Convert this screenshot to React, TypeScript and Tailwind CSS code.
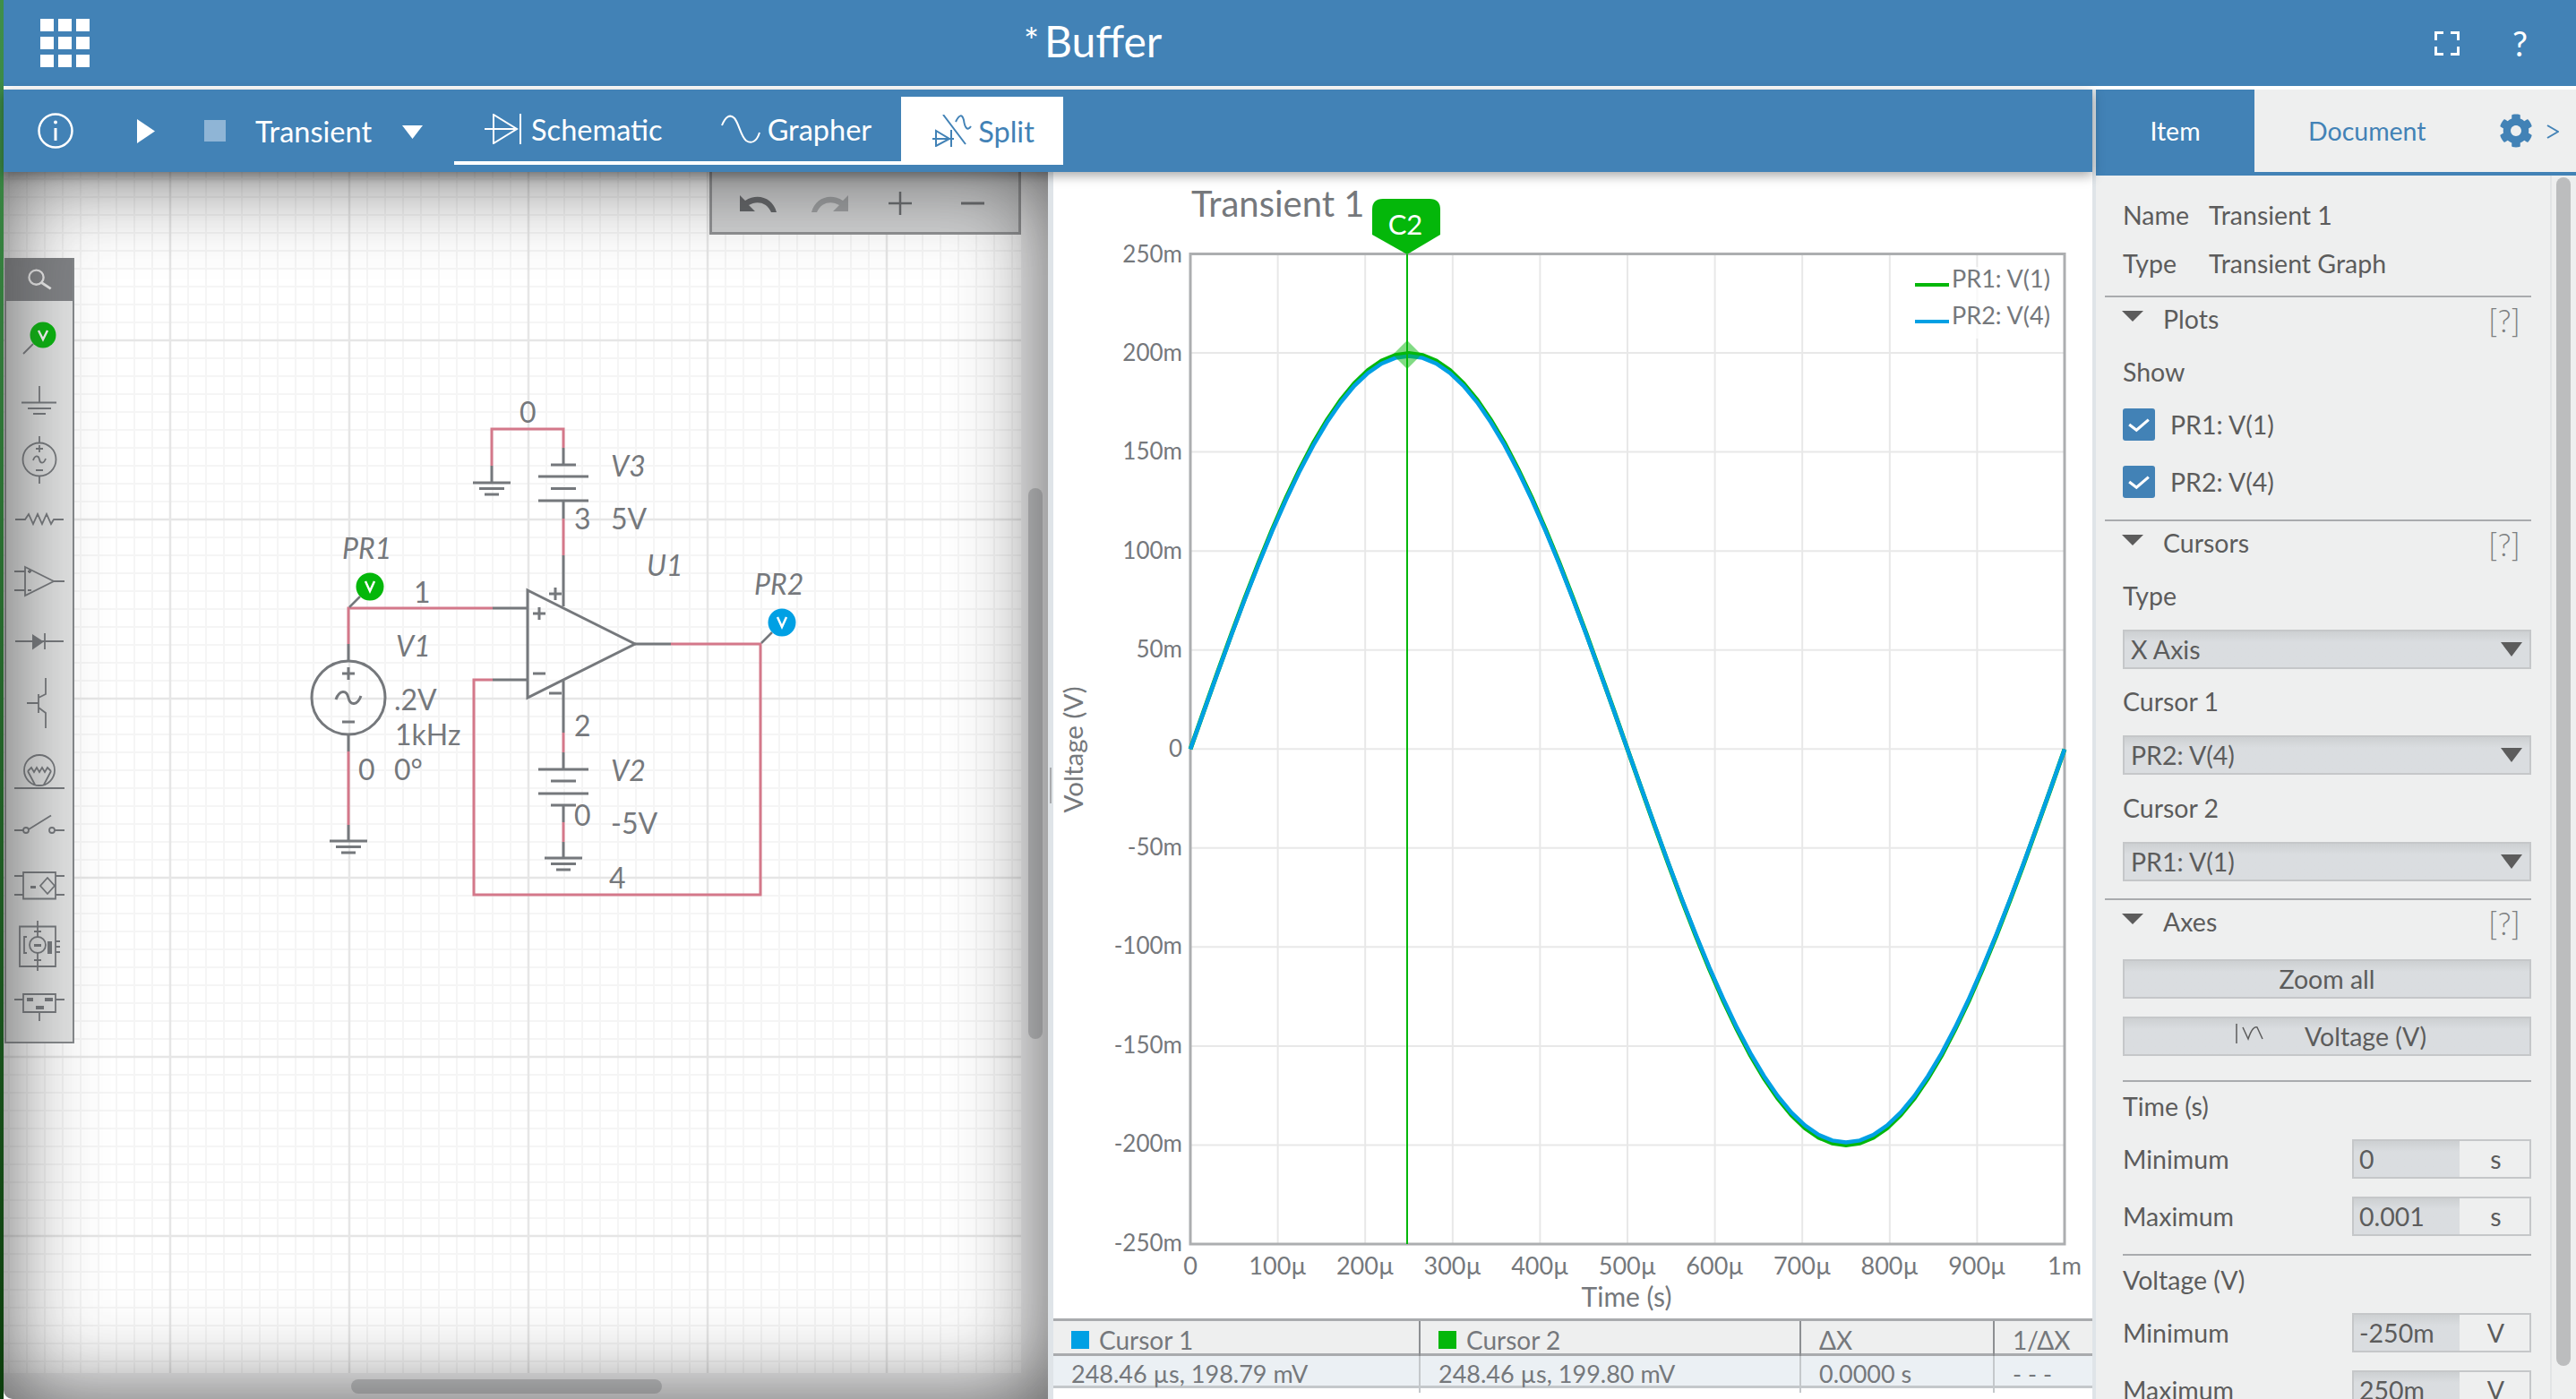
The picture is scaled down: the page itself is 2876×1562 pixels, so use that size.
import { FaCog } from 'react-icons/fa';

const GRAY = '#75787c';
const PINK = '#d4788a';
const GREEN = '#04b70a';
const CYAN = '#00a0e4';

const wavePath = (offset: number) => {
  const pts: string[] = [];
  for (let i = 0; i <= 64; i++) {
    const t = i / 64;
    const x = 1329 + 976 * t;
    const y = 836.5 - (439 + offset) * Math.sin(2 * Math.PI * t);
    pts.push(`${x.toFixed(1)},${y.toFixed(1)}`);
  }
  return 'M' + pts.join(' L');
};

const Ground = ({ x, y }: { x: number; y: number }) => (
  <path d={`M${x - 21} ${y}H${x + 21}M${x - 14} ${y + 6.5}H${x + 14}M${x - 8} ${y + 13}H${x + 8}`} stroke={GRAY} strokeWidth="3" fill="none" />
);

const Label = ({ x, y, italic, children }: { x: number; y: number; italic?: boolean; children: string }) => (
  <text x={x} y={y + 1} fontSize="32" fill={GRAY} fontStyle={italic ? 'italic' : 'normal'}>
    {children}
  </text>
);

const Probe = ({ x, y, color }: { x: number; y: number; color: string }) => (
  <g>
    <path d={`M${x - 23} ${y + 23}L${x - 11} ${y + 11}`} stroke={GRAY} strokeWidth="2.5" />
    <circle cx={x} cy={y} r="15.5" fill={color} />
    <path d={`M${x - 5} ${y - 6}L${x} ${y + 5}L${x + 5} ${y - 6}`} stroke="white" strokeWidth="2.5" fill="none" />
  </g>
);

const Schematic = () => (
  <svg viewBox="4 192 1136 1341" className="block w-[1136px] h-[1341px]">
    <defs>
      <pattern id="grid" patternUnits="userSpaceOnUse" x="180" y="170" width="200" height="200">
        {Array.from({ length: 10 }).map((_, i) => (
          <g key={i} stroke="#f5f5f5" strokeWidth="2">
            <path d={`M${10 + i * 20} 0V200`} />
            <path d={`M0 ${10 + i * 20}H200`} />
          </g>
        ))}
        <path d="M10 0V200M0 10H200" stroke="#e6e6e6" strokeWidth="2.5" />
      </pattern>
    </defs>
    <rect x="4" y="192" width="1136" height="1341" fill="#ffffff" />
    <rect x="4" y="192" width="1136" height="1341" fill="url(#grid)" />

    {/* wires */}
    <g fill="none" stroke={PINK} strokeWidth="3">
      <path d="M549 520V479H629V500" />
      <path d="M629 579V620" />
      <path d="M550 679H389V719" />
      <path d="M389 839V921" />
      <path d="M749 719H849V999H529V759H550" />
      <path d="M629 818V840" />
      <path d="M629 918V940" />
    </g>

    {/* parts */}
    <g fill="none" stroke={GRAY} strokeWidth="3">
      <path d="M549 520V539M629 500V519M629 559V579M629 620V677" />
      <path d="M615 519H643M601 532H657M615 545.5H643M601 559H657" />
      <path d="M550 679H589M550 759H589M709 719H749M389 719V738M389 820V839M389 921V939" />
      <path d="M589 659L709 719L589 779Z" />
      <circle cx="389" cy="779" r="41" />
      <path d="M389 745V759M382 752H396M382 806H396M375 781C379 770 387 770 389 779C391 788 399 788 403 777" />
      <path d="M595 685H609M602 678V692M595 752H609M613 663H627M620 656V670M613 774H627" />
      <path d="M629 760V818M629 840V859M601 859H657M615 872H643M601 886H657M615 899H643M629 899V918M629 940V958" />
    </g>
    <Ground x={549} y={539} />
    <Ground x={389} y={939} />
    <Ground x={629} y={958} />
    <Probe x={413} y={655} color={GREEN} />
    <Probe x={873} y={695} color={CYAN} />

    {/* labels */}
    <Label x={580} y={471}>0</Label>
    <Label x={682} y={531} italic>V3</Label>
    <Label x={641} y={590}>3</Label>
    <Label x={682} y={590}>5V</Label>
    <Label x={382} y={623} italic>PR1</Label>
    <Label x={722} y={642} italic>U1</Label>
    <Label x={462} y={672}>1</Label>
    <Label x={842} y={663} italic>PR2</Label>
    <Label x={442} y={732} italic>V1</Label>
    <Label x={440} y={792}>.2V</Label>
    <Label x={441} y={831}>1kHz</Label>
    <Label x={400} y={870}>0</Label>
    <Label x={440} y={870}>0°</Label>
    <Label x={641} y={821}>2</Label>
    <Label x={682} y={871} italic>V2</Label>
    <Label x={641} y={921}>0</Label>
    <Label x={682} y={930}>-5V</Label>
    <Label x={680} y={991}>4</Label>
  </svg>
);

const PaletteIcons = () => (
  <svg viewBox="7 337 74 825" className="block w-[74px] h-[825px]">
    <g fill="none" stroke={GRAY} strokeWidth="1.8">
      <path d="M26 396L37 385" />
      <path d="M44 432V450M24 450.5H63M31 457H57M37 463H51" />
      <circle cx="44" cy="514" r="18.5" />
      <path d="M44 488V496M44 532V541M40 502H48M44 498V506M40 526H48M37 515C39 509 43 509 44 514C45 519 49 519 51 513" />
      <path d="M17 581H28L32 575L37 586L42 575L47 586L52 575L57 586L60 581H71" />
      <path d="M28 634L60 650L28 666ZM16 639H28M16 660H28M60 650H72M31 639H35M33 637V641M31 660H35" />
      <path d="M17 717H71M50 708V726" />
      <path d="M30 786H43M43 776V797M43 780L51 776V758M43 791L51 797V814" />
      <ellipse cx="44" cy="861" rx="17" ry="17" />
      <path d="M16 881H72M31 862L35 858L38 863L41 858L44 863L47 858L50 863L53 858L57 862M31 862L39 877M57 862L49 877" />
      <path d="M16 928H26M32 927L57 911.5M61 928H72" />
      <circle cx="29" cy="928" r="3" />
      <circle cx="58" cy="928" r="3" />
      <path d="M26 975H62V1004.5H26ZM16 979H26M16 1000H26M62 979H72M62 1000H72M53 981L61 990L53 999L45 990Z" />
      <path d="M22 1035.5H62V1080H22ZM42 1029V1047M42 1065V1085M62 1052H67M62 1058H67M62 1064H67M30 1047H27V1065H30M38 1041H46M38 1073H46" />
      <circle cx="42" cy="1056" r="9" />
      <path d="M26 1111H62V1131H26ZM16 1117H26M62 1117H72M44 1131V1141" />
    </g>
    <path d="M36 709L49 717.5L36 726.5Z" fill={GRAY} />
    <path d="M38 1055H46V1058H38ZM53 1052H58V1066H53ZM30 1115H37V1119H30ZM50 1115H59V1119H50ZM40 1124H49V1128H40ZM34 990H40V993H34Z" fill={GRAY} />
    <circle cx="48" cy="375" r="14.5" fill={GREEN} />
    <path d="M43 370L48 380L53 370" stroke="white" strokeWidth="2.5" fill="none" />
  </svg>
);

const Graph = () => (
  <svg viewBox="1176 192 1160 1280" className="block w-[1160px] h-[1280px]">
    <text x="1330" y="242" fontSize="40" fill={GRAY}>Transient 1</text>

    {/* grid */}
    <g stroke="#e8e8e8" strokeWidth="2">
      {Array.from({ length: 9 }).map((_, i) => (
        <path key={i} d={`M${1329 + 97.6 * (i + 1)} 283.5V1389`} />
      ))}
      {Array.from({ length: 9 }).map((_, i) => (
        <path key={i} d={`M1329 ${283.5 + 110.55 * (i + 1)}H2305`} />
      ))}
    </g>
    <rect x="1329" y="283.5" width="976" height="1105.5" fill="none" stroke="#acaeb0" strokeWidth="3" />

    {/* axis labels */}
    <g fontSize="26" fill={GRAY} textAnchor="end">
      {['250m', '200m', '150m', '100m', '50m', '0', '-50m', '-100m', '-150m', '-200m', '-250m'].map((t, i) => (
        <text key={t} x="1320" y={292.5 + 110.4 * i}>{t}</text>
      ))}
    </g>
    <g fontSize="27" fill={GRAY} textAnchor="middle">
      {['0', '100µ', '200µ', '300µ', '400µ', '500µ', '600µ', '700µ', '800µ', '900µ', '1m'].map((t, i) => (
        <text key={t} x={1329 + 97.6 * i} y="1423">{t}</text>
      ))}
      <text x="1816" y="1459" fontSize="30">Time (s)</text>
      <text x="0" y="0" fontSize="29.5" transform="translate(1209 837) rotate(-90)">Voltage (V)</text>
    </g>

    {/* traces */}
    <path d={wavePath(3)} fill="none" stroke={GREEN} strokeWidth="5" />
    <path d={wavePath(0)} fill="none" stroke={CYAN} strokeWidth="4.5" />

    {/* cursor */}
    <path d="M1571 284V1389" stroke={GREEN} strokeWidth="2" />
    <path d="M1571 380L1587 396L1571 412L1555 396Z" fill={GREEN} fillOpacity="0.5" />
    <path d="M1544 222H1596Q1608 222 1608 234V262L1571 284L1532 262V234Q1532 222 1544 222Z" fill={GREEN} />
    <text x="1569" y="262" fontSize="31" fill="white" textAnchor="middle">C2</text>

    {/* legend */}
    <rect x="2135" y="298" width="157" height="80" fill="white" fillOpacity="0.7" />
    <path d="M2138 318H2176" stroke={GREEN} strokeWidth="4" />
    <path d="M2138 359H2176" stroke={CYAN} strokeWidth="4" />
    <g fontSize="27" fill={GRAY}>
      <text x="2179" y="321">PR1: V(1)</text>
      <text x="2179" y="362">PR2: V(4)</text>
    </g>
  </svg>
);

const SectionHead = ({ title }: { title: string }) => (
  <div className="flex items-center h-[50px] pl-[19px] pr-[12px]">
    <svg viewBox="0 0 24 12" className="w-[24px] h-[12px] mb-[8px] fill-[#5c5c5c]">
      <path d="M0 0H24L12 12Z" />
    </svg>
    <span className="ml-[22px] -mt-[2px]">{title}</span>
    <span className="ml-auto text-[#7d7f81] text-[35px] leading-none font-light">[?]</span>
  </div>
);

const Divider = ({ className }: { className: string }) => <div className={`h-[2px] bg-[#a9abae] ${className}`} />;

const Field = ({ className, children }: { className: string; children: string }) => (
  <div className={`flex items-center h-[50px] ${className}`}>{children}</div>
);

const Select = ({ value, className }: { value: string; className: string }) => (
  <div className={`flex items-center h-[44px] pl-[7px] pr-[8px] border-2 border-[#c5c7c9] bg-linear-to-b from-[#cdd0d2] to-[#dadde0] to-30% ${className}`}>
    {value}
    <svg viewBox="0 0 24 16" className="ml-auto w-[24px] h-[16px] fill-[#5c5c5c]">
      <path d="M0 0H24L12 16Z" />
    </svg>
  </div>
);

const Check = ({ label, className }: { label: string; className: string }) => (
  <div className={`flex items-center h-[36px] ${className}`}>
    <div className="flex items-center justify-center w-[36px] h-[36px] rounded-[3px] bg-[#4282b6]">
      <svg viewBox="0 0 28 20" className="w-[26px] h-[18px]">
        <path d="M2 10L11 17L26 4" stroke="white" strokeWidth="3.5" fill="none" />
      </svg>
    </div>
    <span className="ml-[17px]">{label}</span>
  </div>
);

const NumberRow = ({ label, value, unit, className }: { label: string; value: string; unit: string; className: string }) => (
  <div className={`flex items-center h-[44px] ${className}`}>
    {label}
    <div className="ml-auto flex items-center w-[200px] h-full border-2 border-[#c5c7c9]">
      <div className="flex items-center w-[118px] h-full pl-[6px] bg-linear-to-b from-[#cdd0d2] to-[#dadde0] to-30%">{value}</div>
      <div className="flex-1 text-center pl-[3px]">{unit}</div>
    </div>
  </div>
);

const ButtonBar = ({ className, children }: { className: string; children: React.ReactNode }) => (
  <div className={`flex items-center justify-center h-[44px] border-2 border-[#c5c7c9] bg-linear-to-b from-[#cdd0d2] to-[#dadde0] to-30% ${className}`}>
    {children}
  </div>
);

const Inspector = () => (
  <aside className="flex flex-col w-[536px] h-[1462px] bg-[#eeefef] text-[#5c5c5c] text-[28.5px]">
    <div className="flex items-center h-[96px] border-b-4 border-[#4282b6] shrink-0">
      <div className="flex items-center justify-center w-[177px] h-full bg-[#4282b6] text-white">Item</div>
      <div className="ml-[60px] text-[#4282b6]">Document</div>
      <FaCog className="ml-[81px] text-[#4282b6] text-[38px]" />
      <svg viewBox="0 0 14 16" className="ml-[15px] mt-[2px] w-[14px] h-[16px]">
        <path d="M1 1L13 8L1 15" stroke="#4282b6" strokeWidth="2" fill="none" />
      </svg>
    </div>
    <div className="flex flex-1 min-h-0">
      <div className="w-[507px] pl-[10px] pr-[21px] pt-[17px] overflow-hidden">
        <div className="flex items-center h-[54px] pl-[20px]">
          <span className="w-[96px]">Name</span>Transient 1
        </div>
        <div className="flex items-center h-[54px] pl-[20px]">
          <span className="w-[96px]">Type</span>Transient Graph
        </div>
        <Divider className="mt-[9px]" />
        <SectionHead title="Plots" />
        <Field className="mt-[8px] ml-[20px]">Show</Field>
        <Check label="PR1: V(1)" className="mt-[16px] ml-[20px]" />
        <Check label="PR2: V(4)" className="mt-[28px] ml-[20px]" />
        <Divider className="mt-[24px]" />
        <SectionHead title="Cursors" />
        <Field className="mt-[8px] ml-[20px]">Type</Field>
        <Select value="X Axis" className="mt-[13px] ml-[20px]" />
        <Field className="mt-[11px] ml-[20px]">Cursor 1</Field>
        <Select value="PR2: V(4)" className="mt-[13px] ml-[20px]" />
        <Field className="mt-[12px] ml-[20px]">Cursor 2</Field>
        <Select value="PR1: V(1)" className="mt-[13px] ml-[20px]" />
        <Divider className="mt-[19px]" />
        <SectionHead title="Axes" />
        <ButtonBar className="mt-[16px] ml-[20px]">Zoom all</ButtonBar>
        <ButtonBar className="mt-[20px] ml-[20px]">
          <svg viewBox="0 0 32 22" className="ml-[8px] w-[32px] h-[24px] mb-[6px] mr-[46px]">
            <path d="M2 0V22M9 4L15 17Q20 2 25 4L31 17" stroke="#5c5c5c" strokeWidth="1.5" fill="none" />
          </svg>
          Voltage (V)
        </ButtonBar>
        <Divider className="mt-[27px] ml-[20px]" />
        <Field className="mt-[2px] ml-[20px]">Time (s)</Field>
        <NumberRow label="Minimum" value="0" unit="s" className="mt-[12px] ml-[20px]" />
        <NumberRow label="Maximum" value="0.001" unit="s" className="mt-[20px] ml-[20px]" />
        <Divider className="mt-[20px] ml-[20px]" />
        <Field className="mt-[2px] ml-[20px]">Voltage (V)</Field>
        <NumberRow label="Minimum" value="-250m" unit="V" className="mt-[12px] ml-[20px]" />
        <NumberRow label="Maximum" value="250m" unit="V" className="mt-[20px] ml-[20px]" />
      </div>
      <div className="w-[29px] border-l-2 border-[#e2e4e5] pl-[5px] pt-[2px]">
        <div className="w-[16px] h-[1327px] rounded-full bg-[#bcbdbe]" />
      </div>
    </div>
  </aside>
);

const cursorCell = 'flex items-center pl-[20px] pb-[2px] border-r-2 border-[#8d8f92]';
const valueCell = 'flex items-center pl-[20px] border-r-2 border-[#c4c8cb]';

const CursorTable = () => (
  <div className="text-[27px] text-[#75787c]">
    <div className="grid grid-cols-[410px_425px_216px_109px] h-[42px] border-y-[3px] border-[#a9abae] bg-[#eeefef] text-[28px]">
      <div className={cursorCell}>
        <span className="w-[20px] h-[20px] mr-[11px] bg-[#00a0e4]" />
        Cursor 1
      </div>
      <div className={cursorCell}>
        <span className="w-[20px] h-[20px] mr-[11px] bg-[#04b70a]" />
        Cursor 2
      </div>
      <div className={cursorCell}>ΔX</div>
      <div className="flex items-center pl-[20px] pb-[2px]">1/ΔX</div>
    </div>
    <div className="grid grid-cols-[410px_425px_216px_109px] h-[36px] border-b-[3px] border-[#c4c8cb] bg-[#ebf0f4]">
      <div className={valueCell}>248.46 µs, 198.79 mV</div>
      <div className={valueCell}>248.46 µs, 199.80 mV</div>
      <div className={valueCell}>0.0000 s</div>
      <div className="flex items-center pl-[20px]">- - -</div>
    </div>
  </div>
);

const Toolbar = () => (
  <div className="relative z-10 flex items-center h-[92px] bg-[#4282b6] text-white text-[32.5px] shadow-[0_4px_12px_rgba(0,0,0,0.35)]">
    <svg viewBox="0 0 40 42" className="ml-[38px] w-[40px] h-[42px]">
      <circle cx="20" cy="21" r="18.5" stroke="white" strokeWidth="2.5" fill="none" />
      <path d="M20 18V32" stroke="white" strokeWidth="3" />
      <circle cx="20" cy="11.5" r="2" fill="white" />
    </svg>
    <svg viewBox="0 0 20 27" className="ml-[71px] w-[20px] h-[27px] fill-white">
      <path d="M0 0L20 13.5L0 27Z" />
    </svg>
    <div className="ml-[55px] w-[24px] h-[24px] bg-[#8fb5d6]" />
    <span className="ml-[33px] mt-[2px]">Transient</span>
    <svg viewBox="0 0 23 15" className="ml-[34px] mt-[2px] w-[23px] h-[15px] fill-white">
      <path d="M0 0H23L11.5 15Z" />
    </svg>
    <div className="self-end flex items-stretch ml-[35px] mb-[8px] h-[76px]">
      <div className="flex items-center pl-[34px] pr-[33px] border-b-4 border-white">
        <svg viewBox="0 0 44 34" className="w-[44px] h-[34px]">
          <path d="M0 17H34M10 1V33L36 17ZM40 0V34" stroke="white" strokeWidth="2" fill="none" />
        </svg>
        <span className="ml-[8px] mt-[2px]">Schematic</span>
        <svg viewBox="0 0 44 32" className="ml-[65px] w-[44px] h-[32px]">
          <path d="M1 12C5 2 10 -1 15 4C20 10 22 24 28 29C34 33 40 30 43 20" stroke="white" strokeWidth="2" fill="none" />
        </svg>
        <span className="ml-[8px] mt-[2px]">Grapher</span>
      </div>
      <div className="flex items-center w-[181px] pl-[34px] bg-white text-[#4282b6]">
        <svg viewBox="0 0 46 36" className="w-[46px] h-[36px]">
          <path d="M1 27H25M5 18V35L20 27ZM22 17V36M13 0L38 33M27 8C31 0 34 -1 36 6C37 14 40 19 44 13" stroke="#4282b6" strokeWidth="2" fill="none" />
        </svg>
        <span className="ml-[6px] mt-[2px]">Split</span>
      </div>
    </div>
  </div>
);

const Canvas = () => (
  <div className="relative flex flex-col w-[1166px] h-[1370px] overflow-hidden rounded-bl-[10px]">
    <div className="flex h-[1341px] shrink-0">
      <Schematic />
      <div className="w-[30px] bg-[#f2f2f3] pl-[8px] pt-[353px]">
        <div className="w-[16px] h-[615px] rounded-full bg-[#c4c5c7]" />
      </div>
    </div>
    <div className="flex-1 bg-[#f2f2f3] pl-[388px] pt-[7px]">
      <div className="w-[347px] h-[16px] rounded-full bg-[#c4c5c7]" />
    </div>

    {/* undo and zoom buttons */}
    <div className="absolute left-[788px] top-0 flex items-center w-[348px] h-[70px] pl-[31px] pt-[2px] border-[3px] border-t-0 border-[#8f9092] bg-[#d0d1d2]">
      <svg viewBox="0 0 41 20" className="w-[41px] h-[20px] fill-[#5f6164]">
        <path d="M0 1V19H17L10 12C18 7 30 8 35 20H41C37 4 20 -2 6 7Z" />
      </svg>
      <svg viewBox="0 0 41 20" className="ml-[39px] w-[41px] h-[20px] fill-[#9c9ea0]">
        <path d="M41 1V19H24L31 12C23 7 11 8 6 20H0C4 4 21 -2 35 7Z" />
      </svg>
      <svg viewBox="0 0 26 26" className="ml-[45px] w-[26px] h-[26px]">
        <path d="M0 13H26M13 0V26" stroke="#66686b" strokeWidth="2.5" />
      </svg>
      <svg viewBox="0 0 26 26" className="ml-[55px] w-[26px] h-[26px]">
        <path d="M0 13H26" stroke="#66686b" strokeWidth="3" />
      </svg>
    </div>

    {/* component palette */}
    <div className="absolute left-[1px] top-[96px] w-[78px] h-[877px] border-2 border-t-0 border-[#85888b] bg-[#e3e4e4]">
      <div className="flex items-center justify-center h-[48px] bg-[#808285]">
        <svg viewBox="0 0 26 20" className="w-[30px] h-[24px]">
          <circle cx="10" cy="8" r="7" stroke="#f0f0f0" strokeWidth="2" fill="none" />
          <path d="M15 13L24 19" stroke="#f0f0f0" strokeWidth="2.5" />
        </svg>
      </div>
      <PaletteIcons />
    </div>

    {/* edge shading, falls over everything on the canvas */}
    <div className="absolute inset-0 pointer-events-none shadow-[inset_0_0_100px_0_rgba(70,70,70,0.9)]" />
  </div>
);

export default function App() {
  return (
    <div className="flex flex-col w-[2876px] h-[1562px] overflow-hidden pl-[4px] bg-linear-to-b from-[#3f8f4a] to-[#0b3d0b] [font-family:Lato,sans-serif]">
      <header className="flex items-center h-[100px] shrink-0 border-b-4 border-white bg-[#4282b6] text-white">
        <div className="grid grid-cols-[15px_15px_15px] gap-x-[5px] gap-y-[6px] ml-[41px]">
          {Array.from({ length: 9 }).map((_, i) => (
            <div key={i} className="h-[14px] bg-white" />
          ))}
        </div>
        <div className="flex items-start ml-[1043px] mb-[4px]">
          <span className="text-[40px] leading-none mt-[4px] mr-[6px]">*</span>
          <span className="text-[48px] leading-none">Buffer</span>
        </div>
        <svg viewBox="0 0 28 27" className="ml-auto w-[28px] h-[27px]">
          <path d="M1.5 10V1.5H10M18 1.5H26.5V10M1.5 17V25.5H10M18 25.5H26.5V17" stroke="white" strokeWidth="3" fill="none" />
        </svg>
        <span className="ml-[59px] mr-[54px] text-[38px] leading-none">?</span>
      </header>
      <div className="flex flex-1 min-h-0">
        <div className="flex flex-col w-[2332px]">
          <Toolbar />
          <div className="flex flex-1 min-h-0 bg-white">
            <Canvas />
            <div className="flex items-center justify-start w-[6px] bg-[#dfe4e8] pl-[2px]">
              <div className="w-[2px] h-[40px] bg-[#a9abae]" />
            </div>
            <div className="flex flex-col w-[1160px]">
              <Graph />
              <CursorTable />
            </div>
          </div>
        </div>
        <div className="w-[4px] bg-[#dfe4e8]" />
        <Inspector />
      </div>
    </div>
  );
}
